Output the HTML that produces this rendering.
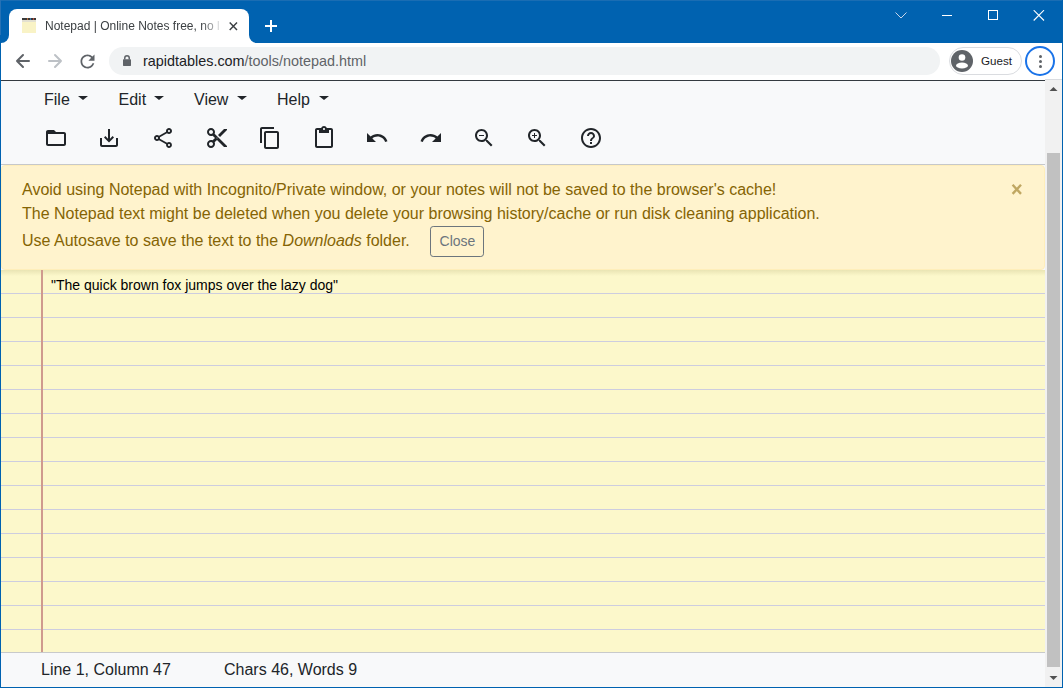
<!DOCTYPE html>
<html><head><meta charset="utf-8">
<style>
*{box-sizing:border-box}
html,body{margin:0;padding:0}
body{width:1063px;height:688px;overflow:hidden;position:relative;background:#fff;font-family:"Liberation Sans",sans-serif}
.a{position:absolute}
#titlebar{left:0;top:0;width:1063px;height:43px;background:#0062b0}
#titlebar .hl{left:0;top:0;width:1063px;height:1px;background:#1a6db3}
#tab{left:9px;top:9px;width:240px;height:34px;background:#fff;border-radius:8px 8px 0 0}
.flare{width:8px;height:8px;top:35px;background:#fff}
.flare i{position:absolute;left:0;top:0;width:8px;height:8px;background:#0062b0}
#tabtitle{left:45px;top:19px;font-size:12px;color:#3c4043;white-space:nowrap;width:175px;overflow:hidden;
 -webkit-mask-image:linear-gradient(to right,#000 156px,transparent 178px)}
#toolbar{left:0;top:43px;width:1063px;height:37px;background:#fff}
#omni{left:109px;top:47px;width:831px;height:28px;border-radius:14px;background:#f1f3f4}
#url{left:143px;top:53px;font-size:14.4px;color:#202124;white-space:nowrap}
#url span{color:#5f6368}
#guest{left:949px;top:47px;width:73px;height:28px;border-radius:14px;border:1px solid #dadce0;background:#fff}
#guesttxt{left:981px;top:54px;font-size:11.6px;color:#202124}
#menuring{left:1025px;top:46px;width:30px;height:30px;border-radius:50%;border:2px solid #1a73e8}
#page{left:1px;top:80px;width:1044px;height:607px;background:#f8f9fa}
#darkline{left:1px;top:80px;width:1044px;height:1px;background:#343a40}
#tbsep{left:1045px;top:79px;width:17px;height:1px;background:#dadce0}
.menu{top:91px;font-size:16px;color:#212529;white-space:nowrap}
.caret{width:0;height:0;border-left:5px solid transparent;border-right:5px solid transparent;border-top:4.4px solid #212529;top:96px}
#navsep{left:1px;top:164px;width:1044px;height:1px;background:#c6c8ca}
.ico{top:126px;width:24px;height:24px}
#notepad{left:1px;top:270px;width:1044px;height:382px;background-color:#fcf8cb;
 background-image:repeating-linear-gradient(to bottom,transparent 0,transparent 23px,#cdcddf 23px,#cdcddf 24px);
 background-position:0 0}
#shadow{left:1px;top:270px;width:1044px;height:6px;background:linear-gradient(to bottom,rgba(120,110,40,.14),rgba(120,110,40,0))}
#margin{left:41px;top:270px;width:2px;height:382px;background:#cf9a8e}
#ta{left:51px;top:277px;font-size:14px;color:#000;white-space:nowrap}
#npbottom{left:1px;top:652px;width:1044px;height:1px;background:#c8cacb}
#alert{left:1px;top:165px;width:1044px;height:105px;background:#fff3cd;border:1px solid #ffeeba;border-radius:4px}
.al{left:22px;font-size:16px;color:#856404;white-space:nowrap}
#closebtn{left:430px;top:226px;width:54px;height:31px;padding-left:1px;border:1px solid #6c757d;border-radius:3.2px;font-size:14px;color:#6c757d;text-align:center;line-height:29px}
#x{left:1010.5px;top:172px;font-size:24px;font-weight:bold;color:#c2ab68;line-height:36px}
.foot{top:661px;font-size:16px;color:#212529;white-space:nowrap}
#sb{left:1045px;top:80px;width:17px;height:607px;background:#f1f1f1}
#thumb{left:1047px;top:153px;width:13px;height:514px;background:#c1c1c1}
#wb-l{left:0;top:0;width:1px;height:688px;background:#0062b0}
#wb-r{left:1062px;top:0;width:1px;height:688px;background:#0062b0}
#wb-b{left:0;top:687px;width:1063px;height:1px;background:#0062b0}
</style></head><body>
<div id="titlebar" class="a"><div class="a hl"></div></div>
<div id="tab" class="a"></div>
<div class="a flare" style="left:1px"><i style="border-bottom-right-radius:8px"></i></div>
<div class="a flare" style="left:249px"><i style="border-bottom-left-radius:8px"></i></div>
<!-- favicon -->
<svg class="a" style="left:22px;top:18px" width="14" height="15" viewBox="0 0 14 15">
 <rect x="0" y="4" width="14" height="11" fill="#f9f3c6"/>
 <rect x="0" y="0" width="14" height="2" fill="#3a3a3a"/>
 <rect x="5" y="0" width="1" height="2" fill="#b86b3a"/><rect x="8" y="0" width="1" height="2" fill="#3a7ab8"/><rect x="11" y="0" width="1" height="2" fill="#b84a3a"/>
 <rect x="0" y="2" width="14" height="2" fill="#e3e0d0"/>
</svg>
<div id="tabtitle" class="a">Notepad | Online Notes free, no login</div>
<svg class="a" style="left:228px;top:21px" width="10" height="10" viewBox="0 0 10 10"><path d="M1.7 1.6L9 8.9M9 1.6L1.7 8.9" stroke="#3c4043" stroke-width="1.45"/></svg>
<svg class="a" style="left:264px;top:19px" width="14" height="14" viewBox="0 0 14 14"><path d="M7 1V13M1 7H13" stroke="#fff" stroke-width="2"/></svg>
<!-- window controls -->
<svg class="a" style="left:895px;top:12px" width="12" height="8" viewBox="0 0 12 8"><path d="M0.5 0.5L6 6L11.5 0.5" stroke="#c8d6ea" stroke-width="1" fill="none"/></svg>
<div class="a" style="left:942px;top:15px;width:10px;height:1px;background:#fff"></div>
<div class="a" style="left:988px;top:10px;width:10px;height:10px;border:1px solid #fff"></div>
<svg class="a" style="left:1033px;top:10px" width="12" height="11" viewBox="0 0 12 11"><path d="M0.7 0.2L11 10.5M11 0.2L0.7 10.5" stroke="#fff" stroke-width="1.1"/></svg>

<div id="toolbar" class="a"></div>
<svg class="a" style="left:0;top:43px" width="40" height="36" viewBox="0 43 40 36"><path d="M17 61H29M23 55L17 61L23 67" stroke="#5f6368" stroke-width="2" stroke-linecap="round" stroke-linejoin="round" fill="none"/></svg>
<svg class="a" style="left:40px;top:43px" width="30" height="36" viewBox="40 43 30 36"><path d="M61 61H49M55 55L61 61L55 67" stroke="#bdc1c6" stroke-width="2" stroke-linecap="round" stroke-linejoin="round" fill="none"/></svg>
<svg class="a" style="left:76.5px;top:50.5px" width="21" height="21" viewBox="0 0 24 24"><path fill="#5f6368" d="M17.65 6.35C16.2 4.9 14.21 4 12 4c-4.42 0-7.99 3.58-7.99 8s3.57 8 7.99 8c3.73 0 6.84-2.55 7.73-6h-2.08c-.82 2.33-3.04 4-5.65 4-3.31 0-6-2.69-6-6s2.69-6 6-6c1.66 0 3.14.69 4.22 1.78L13 11h7V4l-2.35 2.35z"/></svg>
<div id="omni" class="a"></div>
<svg class="a" style="left:123px;top:55px" width="8" height="11" viewBox="0 0 8 11"><rect x="0" y="4.3" width="8" height="6.6" rx="0.6" fill="#5f6368"/><path d="M1.75 4.6V3a2.25 2.25 0 0 1 4.5 0V4.6" stroke="#5f6368" stroke-width="1.5" fill="none"/></svg>
<div id="url" class="a">rapidtables.com<span>/tools/notepad.html</span></div>
<div id="guest" class="a"></div>
<svg class="a" style="left:951px;top:50px" width="22" height="22" viewBox="0 0 22 22"><circle cx="11" cy="11" r="11" fill="#5f6368"/><circle cx="11" cy="7.5" r="3.3" fill="#fff"/><ellipse cx="11" cy="15.5" rx="6" ry="3" fill="#fff"/></svg>
<div id="guesttxt" class="a">Guest</div>
<div id="menuring" class="a"></div>
<div class="a" style="left:1038.5px;top:55px;width:3px;height:3px;border-radius:50%;background:#5f6368"></div>
<div class="a" style="left:1038.5px;top:60px;width:3px;height:3px;border-radius:50%;background:#5f6368"></div>
<div class="a" style="left:1038.5px;top:65px;width:3px;height:3px;border-radius:50%;background:#5f6368"></div>
<div id="tbsep" class="a"></div>

<div id="page" class="a"></div>
<div id="darkline" class="a"></div>
<div class="a menu" style="left:44px">File</div><div class="a caret" style="left:78px"></div>
<div class="a menu" style="left:118.5px">Edit</div><div class="a caret" style="left:154px"></div>
<div class="a menu" style="left:194px">View</div><div class="a caret" style="left:237px"></div>
<div class="a menu" style="left:277px">Help</div><div class="a caret" style="left:319px"></div>

<svg class="a ico" style="left:44px" viewBox="0 0 24 24"><path fill="#212529" d="M20 6h-8l-2-2H4c-1.1 0-1.99.9-1.99 2L2 18c0 1.1.9 2 2 2h16c1.1 0 2-.9 2-2V8c0-1.1-.9-2-2-2zm0 12H4V8h16v10z"/></svg>
<svg class="a ico" style="left:97px" viewBox="0 0 24 24"><path fill="#212529" d="M19 12v7H5v-7H3v7c0 1.1.9 2 2 2h14c1.1 0 2-.9 2-2v-7h-2zm-6 .67l2.59-2.58L17 11.5l-5 5-5-5 1.41-1.41L11 12.67V3h2z"/></svg>
<svg class="a ico" style="left:151px" viewBox="0 0 24 24"><path fill="#212529" d="M18 16.08c-.76 0-1.44.3-1.96.77L8.91 12.7c.05-.23.09-.46.09-.7s-.04-.47-.09-.7l7.05-4.11c.54.5 1.25.81 2.04.81 1.66 0 3-1.34 3-3s-1.34-3-3-3-3 1.34-3 3c0 .24.04.47.09.7L8.04 9.81C7.5 9.31 6.79 9 6 9c-1.66 0-3 1.34-3 3s1.34 3 3 3c.79 0 1.5-.31 2.04-.81l7.12 4.16c-.05.21-.08.43-.08.65 0 1.61 1.31 2.92 2.92 2.92s2.92-1.31 2.92-2.92-1.31-2.92-2.92-2.92zM18 4c.55 0 1 .45 1 1s-.45 1-1 1-1-.45-1-1 .45-1 1-1zM6 13c-.55 0-1-.45-1-1s.45-1 1-1 1 .45 1 1-.45 1-1 1zm12 7.02c-.55 0-1-.45-1-1s.45-1 1-1 1 .45 1 1-.45 1-1 1z"/></svg>
<svg class="a ico" style="left:204.5px" viewBox="0 0 24 24"><path fill="#212529" d="M9.64 7.64c.23-.5.36-1.05.36-1.64 0-2.21-1.79-4-4-4S2 3.79 2 6s1.79 4 4 4c.59 0 1.14-.13 1.64-.36L10 12l-2.36 2.36C7.14 14.13 6.59 14 6 14c-2.21 0-4 1.79-4 4s1.79 4 4 4 4-1.79 4-4c0-.59-.13-1.14-.36-1.64L12 14l7 7h3v-1L9.64 7.64zM6 8c-1.1 0-2-.89-2-2s.9-2 2-2 2 .89 2 2-.9 2-2 2zm0 12c-1.1 0-2-.89-2-2s.9-2 2-2 2 .89 2 2-.9 2-2 2zm6-7.5c-.28 0-.5-.22-.5-.5s.22-.5.5-.5.5.22.5.5-.22.5-.5.5zM19 3l-6 6 2 2 7-7V3z"/></svg>
<svg class="a ico" style="left:258px" viewBox="0 0 24 24"><path fill="#212529" d="M16 1H4c-1.1 0-2 .9-2 2v14h2V3h12V1zm3 4H8c-1.1 0-2 .9-2 2v14c0 1.1.9 2 2 2h11c1.1 0 2-.9 2-2V7c0-1.1-.9-2-2-2zm0 16H8V7h11v14z"/></svg>
<svg class="a ico" style="left:311.5px" viewBox="0 0 24 24"><path fill="#212529" d="M19 2h-4.18C14.4.84 13.3 0 12 0c-1.3 0-2.4.84-2.82 2H5c-1.1 0-2 .9-2 2v16c0 1.1.9 2 2 2h14c1.1 0 2-.9 2-2V4c0-1.1-.9-2-2-2zm-7 0c.55 0 1 .45 1 1s-.45 1-1 1-1-.45-1-1 .45-1 1-1zm7 18H5V4h2v3h10V4h2v16z"/></svg>
<svg class="a ico" style="left:364.5px" viewBox="0 0 24 24"><path fill="#212529" d="M12.5 8c-2.65 0-5.05.99-6.9 2.6L2 7v9h9l-3.62-3.62c1.39-1.16 3.16-1.88 5.12-1.88 3.54 0 6.55 2.31 7.6 5.5l2.37-.78C21.08 11.03 17.15 8 12.5 8z"/></svg>
<svg class="a ico" style="left:419px" viewBox="0 0 24 24"><path fill="#212529" d="M18.4 10.6C16.55 8.99 14.15 8 11.5 8c-4.65 0-8.58 3.03-9.96 7.22L3.9 16c1.05-3.19 4.05-5.5 7.6-5.5 1.95 0 3.73.72 5.12 1.88L13 16h9V7l-3.6 3.6z"/></svg>
<svg class="a ico" style="left:472px" viewBox="0 0 24 24"><path fill="#212529" d="M15.5 14h-.79l-.28-.27C15.41 12.59 16 11.11 16 9.5 16 5.91 13.09 3 9.5 3S3 5.91 3 9.5 5.91 16 9.5 16c1.61 0 3.09-.59 4.23-1.57l.27.28v.79l5 4.99L20.49 19l-4.99-5zm-6 0C7.01 14 5 11.99 5 9.5S7.01 5 9.5 5 14 7.01 14 9.5 11.99 14 9.5 14zM7 9h5v1H7z"/></svg>
<svg class="a ico" style="left:525px" viewBox="0 0 24 24"><path fill="#212529" d="M15.5 14h-.79l-.28-.27C15.41 12.59 16 11.11 16 9.5 16 5.91 13.09 3 9.5 3S3 5.91 3 9.5 5.91 16 9.5 16c1.61 0 3.09-.59 4.23-1.57l.27.28v.79l5 4.99L20.49 19l-4.99-5zm-6 0C7.01 14 5 11.99 5 9.5S7.01 5 9.5 5 14 7.01 14 9.5 11.99 14 9.5 14zm2.5-4h-2v2H9v-2H7V9h2V7h1v2h2v1z"/></svg>
<svg class="a ico" style="left:579px" viewBox="0 0 24 24"><path fill="#212529" d="M11 18h2v-2h-2v2zm1-16C6.48 2 2 6.48 2 12s4.48 10 10 10 10-4.48 10-10S17.52 2 12 2zm0 18c-4.41 0-8-3.59-8-8s3.59-8 8-8 8 3.59 8 8-3.59 8-8 8zm0-14c-2.21 0-4 1.79-4 4h2c0-1.1.9-2 2-2s2 .9 2 2c0 2-3 1.75-3 5h2c0-2.25 3-2.5 3-5 0-2.21-1.79-4-4-4z"/></svg>
<div id="navsep" class="a"></div>

<div id="notepad" class="a"></div>
<div id="shadow" class="a"></div>
<div id="margin" class="a"></div>
<div id="ta" class="a">"The quick brown fox jumps over the lazy dog"</div>
<div id="npbottom" class="a"></div>

<div id="alert" class="a"></div>
<div class="a al" style="top:181px">Avoid using Notepad with Incognito/Private window, or your notes will not be saved to the browser's cache!</div>
<div class="a al" style="top:205px">The Notepad text might be deleted when you delete your browsing history/cache or run disk cleaning application.</div>
<div class="a al" style="top:232px">Use Autosave to save the text to the <i>Downloads</i> folder.</div>
<div id="closebtn" class="a">Close</div>
<svg class="a" style="left:1000px;top:175px" width="30" height="30" viewBox="1000 175 30 30"><path d="M1012.6 184.8L1021 193.9M1021 184.8L1012.6 193.9" stroke="#c0a762" stroke-width="2.4" fill="none"/></svg>

<div class="a foot" style="left:41px">Line 1, Column 47</div>
<div class="a foot" style="left:224px">Chars 46, Words 9</div>

<div id="sb" class="a"></div>
<div id="thumb" class="a"></div>
<svg class="a" style="left:1049px;top:86px" width="9" height="6" viewBox="0 0 9 6"><path d="M0.5 5L4.5 1L8.5 5z" fill="#505050"/></svg>
<svg class="a" style="left:1049px;top:675px" width="9" height="6" viewBox="0 0 9 6"><path d="M0.5 1L4.5 5L8.5 1z" fill="#505050"/></svg>

<div id="wb-l" class="a"></div><div class="a" style="left:0;top:0;width:1px;height:35px;background:#2571b5"></div>
<div id="wb-r" class="a"></div>
<div id="wb-b" class="a"></div>
</body></html>
